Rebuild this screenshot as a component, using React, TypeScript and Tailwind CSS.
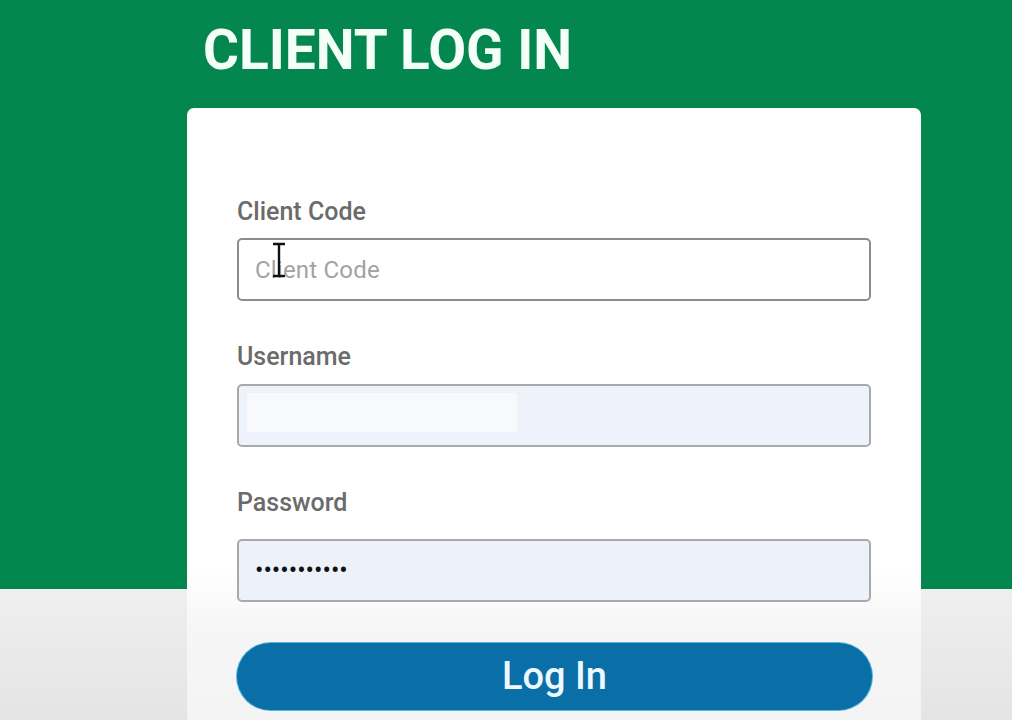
import React from "react"

const font = { fontFamily: "Roboto, 'Noto Sans', Arial, sans-serif" }

function Field({
  label,
  children,
  className = "",
}: {
  label: string
  children: React.ReactNode
  className?: string
}) {
  return (
    <div className={className}>
      <div className="text-[25px] font-medium leading-[30px] text-[#6b6b6b]">{label}</div>
      {children}
    </div>
  )
}

export default function App() {
  return (
    <div
      className="min-h-[720px] w-[1012px] overflow-hidden bg-[linear-gradient(to_bottom,#03874f_0px,#03874f_589px,#efefef_589px,#e4e4e4_720px)]"
      style={font}
    >
      <div className="pl-[187px]">
        <h1 className="ml-[16px] pt-[23px] text-[55px] font-bold leading-[55px] text-[#f4fff8]">
          CLIENT LOG IN
        </h1>

        <div className="mt-[30px] h-[640px] w-[734px] rounded-t-[7px] bg-[linear-gradient(to_bottom,#ffffff_0px,#ffffff_460px,#f6f6f6_520px,#f3f3f3_640px)] px-[50px] pt-[89px]">
          <Field label="Client Code">
            <div className="relative mt-[11px]">
              <input
                readOnly
                placeholder="Client Code"
                className="h-[63px] w-[634px] rounded-[5px] border-2 border-[#8c8c8c] bg-white pl-[16px] text-[24px] tracking-[0.2px] text-[#444] outline-none placeholder:text-[#a3a3a3]"
              />
              <svg
                className="pointer-events-none absolute left-[34px] top-[4px]"
                width="16"
                height="36"
                viewBox="0 0 16 36"
              >
                <path d="M2 2h12M8 2v32M2 34h12" stroke="#111" strokeWidth="2.4" fill="none" />
              </svg>
            </div>
          </Field>

          <Field label="Username" className="mt-[41px]">
            <div className="relative mt-[12px]">
              <input
                readOnly
                className="h-[63px] w-[634px] rounded-[5px] border-2 border-[#a9a9a9] bg-[#edf2fb] pl-[16px] text-[22px] outline-none"
              />
              <span className="pointer-events-none absolute left-[10px] top-[9px] h-[39px] w-[270px] bg-[#f8f9fc]" />
            </div>
          </Field>

          <Field label="Password" className="mt-[41px]">
            <div className="mt-[21px]">
              <input
                readOnly
                type="password"
                value="abcdefghijk"
                className="h-[63px] w-[634px] rounded-[5px] border-2 border-[#a9a9a9] bg-[#edf1fa] pl-[16px] text-[25px] text-[#111] outline-none"
              />
            </div>
          </Field>

          <button className="mt-[41px] flex h-[67px] w-[635px] items-center justify-center rounded-full bg-[#0a6ea7] text-[38px] font-medium text-[#eef9ff] shadow-[0_0_0_1px_#57b3df]">
            Log In
          </button>
        </div>
      </div>
    </div>
  )
}
